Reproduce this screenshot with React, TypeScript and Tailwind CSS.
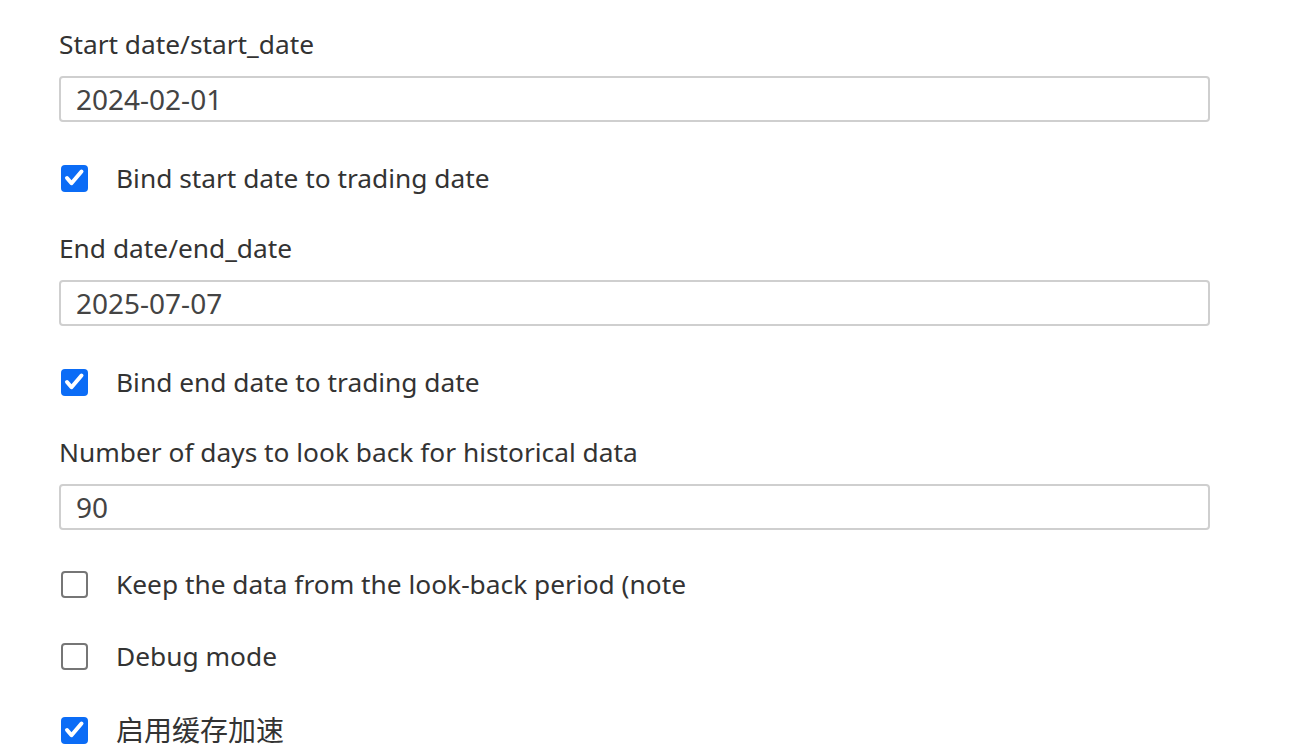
import React from 'react'

const font = { fontFamily: '"Noto Sans", "Noto Sans CJK SC", sans-serif' }

function Field({ label, value }: { label: string; value: string }) {
  return (
    <div>
      <div className="h-[36px] leading-[36px] text-[26.3px] text-[#333]">{label}</div>
      <div className="mt-[14px] h-[46px] w-[1151px] rounded-[4px] border-2 border-[#cfcfcf] px-[15px] flex items-center text-[28px] text-[#444]">
        {value}
      </div>
    </div>
  )
}

function Check({ label, checked, cjk }: { label: string; checked: boolean; cjk?: boolean }) {
  return (
    <div className="h-[36px] flex items-center text-[#333]">
      <span
        className={
          checked
            ? 'ml-[2px] w-[27px] h-[27px] rounded-[4px] bg-[#0b6cf6] flex items-center justify-center'
            : 'ml-[2px] w-[27px] h-[27px] rounded-[4px] border-2 border-[#767676] bg-white'
        }
      >
        {checked && (
          <svg width="27" height="27" viewBox="0 0 27 27" fill="none">
            <path d="M6 13l4.5 5.2L20.5 6.5" stroke="white" strokeWidth="4" strokeLinecap="round" strokeLinejoin="round" />
          </svg>
        )}
      </span>
      <span className={cjk ? 'ml-[28px] leading-[36px] text-[28px]' : 'ml-[28px] leading-[36px] text-[26.3px]'}>{label}</span>
    </div>
  )
}

export default function App() {
  return (
    <div className="min-h-screen bg-white pl-[59px] pt-[26px]" style={font}>
      <Field label="Start date/start_date" value="2024-02-01" />
      <div className="mt-[38px]">
        <Check label="Bind start date to trading date" checked />
      </div>

      <div className="mt-[34px]">
        <Field label="End date/end_date" value="2025-07-07" />
      </div>
      <div className="mt-[38px]">
        <Check label="Bind end date to trading date" checked />
      </div>

      <div className="mt-[34px]">
        <Field label="Number of days to look back for historical data" value="90" />
      </div>
      <div className="mt-[36px] flex flex-col gap-[36px]">
        <Check label="Keep the data from the look-back period (note" checked={false} />
        <Check label="Debug mode" checked={false} />
        <div className="mt-[2px]">
          <Check label="启用缓存加速" checked cjk />
        </div>
      </div>
    </div>
  )
}
